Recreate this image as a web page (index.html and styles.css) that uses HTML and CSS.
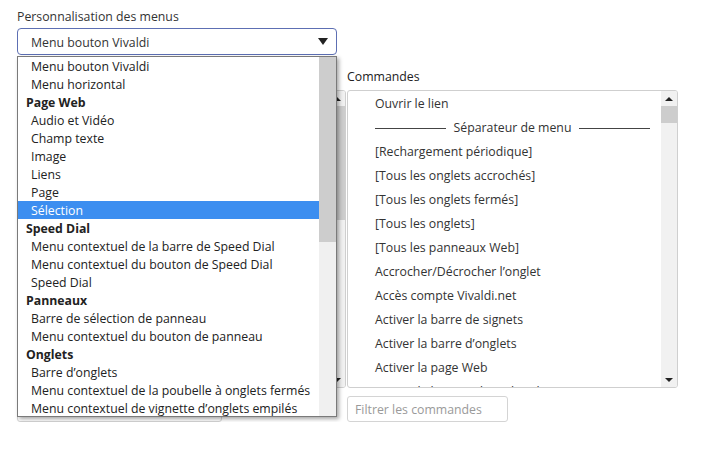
FILE: index.html
```html
<!DOCTYPE html>
<html lang="fr">
<head>
<meta charset="utf-8">
<link rel="stylesheet" href="styles.css">
</head>
<body>
<div class="page">
  <div class="field-label">Personnalisation des menus</div>
  <div class="select-wrap">
    <div class="select">
      <span>Menu bouton Vivaldi</span>
      <svg class="caret" width="10" height="7" viewBox="0 0 10 7"><path d="M0 0H10L5 7Z" fill="#222"/></svg>
    </div>
    <div class="dropdown">
      <ul class="options">
        <li class="opt">Menu bouton Vivaldi</li>
        <li class="opt">Menu horizontal</li>
        <li class="grp">Page Web</li>
        <li class="opt">Audio et Vidéo</li>
        <li class="opt">Champ texte</li>
        <li class="opt">Image</li>
        <li class="opt">Liens</li>
        <li class="opt">Page</li>
        <li class="opt sel">Sélection</li>
        <li class="grp">Speed Dial</li>
        <li class="opt">Menu contextuel de la barre de Speed Dial</li>
        <li class="opt">Menu contextuel du bouton de Speed Dial</li>
        <li class="opt">Speed Dial</li>
        <li class="grp">Panneaux</li>
        <li class="opt">Barre de sélection de panneau</li>
        <li class="opt">Menu contextuel du bouton de panneau</li>
        <li class="grp">Onglets</li>
        <li class="opt">Barre d’onglets</li>
        <li class="opt">Menu contextuel de la poubelle à onglets fermés</li>
        <li class="opt">Menu contextuel de vignette d’onglets empilés</li>
      </ul>
      <div class="dd-scroll"><div class="dd-thumb"></div></div>
    </div>
  </div>

  <div class="columns">
    <div class="col">
      <div class="col-label"></div>
      <div class="listbox">
        <ul class="rows"></ul>
        <div class="vscroll">
          <div class="arrow up"></div>
          <div class="track"><div class="thumb thumb-left"></div></div>
          <div class="arrow down"></div>
        </div>
      </div>
      <div class="input input-left"></div>
    </div>
    <div class="col">
      <div class="col-label">Commandes</div>
      <div class="listbox">
        <ul class="rows">
          <li class="row">Ouvrir le lien</li>
          <li class="row sep"><span>Séparateur de menu</span></li>
          <li class="row">[Rechargement périodique]</li>
          <li class="row">[Tous les onglets accrochés]</li>
          <li class="row">[Tous les onglets fermés]</li>
          <li class="row">[Tous les onglets]</li>
          <li class="row">[Tous les panneaux Web]</li>
          <li class="row">Accrocher/Décrocher l’onglet</li>
          <li class="row">Accès compte Vivaldi.net</li>
          <li class="row">Activer la barre de signets</li>
          <li class="row">Activer la barre d’onglets</li>
          <li class="row">Activer la page Web</li>
          <li class="row">Activer le bouton de recherche</li>
        </ul>
        <div class="vscroll">
          <div class="arrow up"></div>
          <div class="track"><div class="thumb thumb-right"></div></div>
          <div class="arrow down"></div>
        </div>
      </div>
      <div class="input input-right">Filtrer les commandes</div>
    </div>
  </div>
</div>
</body>
</html>
```

FILE: styles.css
```css
* { box-sizing: border-box; }
html, body { margin: 0; background: #fff; }
body {
  font-family: "Open Sans", "Noto Sans", sans-serif;
  font-size: 12.3px;
  color: #333;
}
ul { list-style: none; margin: 0; padding: 0; }

.page { padding: 8px 17px 0; width: 705px; }

.field-label { line-height: 18px; height: 18px; }

.select-wrap { position: relative; width: 320px; margin-top: 2px; }
.select {
  height: 27px;
  border: 1px solid #5d6fb3;
  border-radius: 4px;
  display: flex;
  align-items: center;
  justify-content: space-between;
  padding: 2px 8px 0 13px;
}
.caret { display: block; margin-top: -2px; }

.dropdown {
  position: absolute;
  left: 0;
  top: 28px;
  width: 320px;
  height: 361px;
  border: 1px solid #7a7a7a;
  background: #fff;
  box-shadow: 2px 2px 4px rgba(0,0,0,0.35);
  display: flex;
  z-index: 10;
}
.options { flex: 1; overflow: hidden; }
.options li {
  height: 18px;
  padding-top: 2px;
  line-height: 16px;
  white-space: nowrap;
  color: #222;
}
.opt { padding-left: 13px; }
.grp { padding-left: 8px; font-weight: 700; }
.sel { background: #3c8ef0; color: #fff !important; }
.dd-scroll { width: 17px; background: #f0f0f0; }
.dd-thumb { height: 185px; background: #cdcdcd; }

.columns {
  display: grid;
  grid-template-columns: 329px 331px;
  column-gap: 1px;
  margin-top: 13px;
}
.col-label { line-height: 18px; height: 18px; margin-bottom: 4px; color: #222; }
.listbox {
  height: 298px;
  border: 1px solid #cfcfcf;
  border-radius: 3px;
  display: flex;
  overflow: hidden;
}
.rows { flex: 1; overflow: hidden; }
.row {
  height: 24px;
  padding-top: 2px;
  line-height: 22px;
  padding-left: 27px;
  white-space: nowrap;
  color: #333;
}
.sep {
  display: flex;
  align-items: center;
  gap: 8px;
  padding-right: 11px;
}
.sep::before, .sep::after {
  content: "";
  flex: 1;
  height: 1px;
  background: #444;
}
.vscroll {
  width: 16px;
  background: #f1f1f1;
  display: flex;
  flex-direction: column;
}
.arrow { height: 15px; display: flex; align-items: center; justify-content: center; }
.arrow::after {
  content: "";
  width: 0; height: 0;
  border-left: 4px solid transparent;
  border-right: 4px solid transparent;
}
.arrow.up::after { border-bottom: 4px solid #222; }
.arrow.down::after { border-top: 4px solid #222; }
.track { flex: 1; }
.thumb { background: #cdcdcd; }
.thumb-right { height: 17px; }
.thumb-left { height: 114px; }

.input {
  margin-top: 8px;
  height: 26px;
  border: 1px solid #d4d4d4;
  border-radius: 3px;
  padding: 2px 0 0 7px;
  line-height: 22px;
  color: #9a9a9a;
}
.input-left { width: 205px; }
.input-right { width: 161px; }
```
